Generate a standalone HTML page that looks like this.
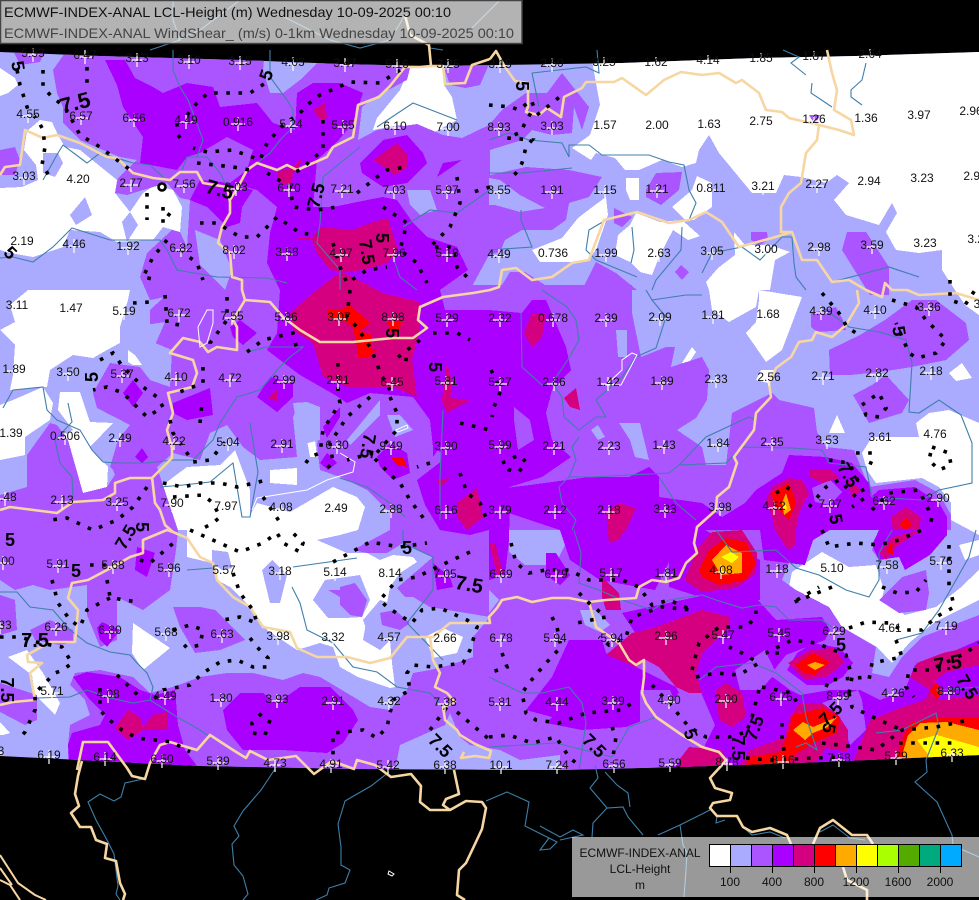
<!DOCTYPE html>
<html><head><meta charset="utf-8"><style>
html,body{margin:0;padding:0;background:#000}
svg{display:block}
.l text{font:12px "Liberation Sans",sans-serif;fill:#111;text-anchor:middle;transform:translateY(4px)}
.b text{font:bold 18px "Liberation Sans",sans-serif;fill:#000;text-anchor:middle}
.t{fill:none;stroke:#f6d6a2;stroke-width:2.6;stroke-linejoin:round}
.r{fill:none;stroke:#3f7fa9;stroke-width:1.1}
.d{fill:none;stroke:#000;stroke-width:3.6;stroke-dasharray:3.6 8.6}
</style></head><body>
<svg width="979" height="900" viewBox="0 0 979 900" xmlns="http://www.w3.org/2000/svg">
<defs>
<clipPath id="m"><polygon points="0,52 100,56 240,60 340,64 420,66 500,65 622,63 756,58 856,56 979,52 979,755 822,762 680,767 560,770 360,769 200,766 100,761 0,756"/></clipPath>
<path id="c" d="M-7 2H7M0 -5V9" stroke="#fff" stroke-width="1.2" fill="none"/>
</defs>
<rect width="979" height="900" fill="#000"/>
<g clip-path="url(#m)" shape-rendering="crispEdges">
<rect width="979" height="900" fill="#aaaaff"/>
<g fill="#fff">
<polygon points="0,68 15,78 18,85 8,93 0,96"/>
<polygon points="0,188 22,187 38,180 36,165 24,150 27,131 40,120 52,122 58,135 65,147 80,150 117,180 115,193 130,212 143,193 155,185 173,190 182,207 180,232 163,227 153,240 117,242 100,232 70,230 63,247 33,257 10,253 0,250"/>
<polygon points="410,66 443,66 444,85 452,97 457,120 433,133 400,125 373,130 377,118 400,90"/>
<polygon points="590,50 979,50 979,315 965,305 955,290 942,270 942,250 919,253 896,250 886,232 897,213 892,203 879,225 846,215 834,200 849,183 837,175 826,183 801,177 784,175 776,193 752,193 719,153 709,135 699,150 696,163 682,167 662,160 639,170 625,170 615,158 596,153 591,160 572,148 590,135 600,105"/>
<polygon points="697,176 712,183 712,207 694,220 685,220 672,207 692,190"/>
<polygon points="626,178 639,178 639,200 630,200 626,190"/>
<polygon points="636,213 660,222 682,220 700,236 688,240 673,230 660,255 652,275 640,272 630,262 615,255 618,235 630,225"/>
<polygon points="606,197 608,215 596,250 586,262 540,262 532,250 562,238 578,218 595,205"/>
<polygon points="734,232 745,245 770,245 790,252 775,260 770,290 709,290 706,282 718,268 735,255"/>
<polygon points="709,290 759,290 756,307 729,322 712,310"/>
<polygon points="759,290 802,297 782,350 766,362 746,333 756,322 759,300"/>
<polygon points="862,453 872,437 919,437 916,423 929,413 949,410 979,423 979,535 951,520 951,503 939,487 922,478 876,483 867,470"/>
<polygon points="949,373 962,363 972,378 956,381"/>
<polygon points="837,415 845,433 829,433"/>
<polygon points="761,370 756,380 768,383 775,370"/>
<polygon points="559,295 570,307 562,310"/>
<polygon points="692,347 696,352 686,367 682,363"/>
<polygon points="792,572 822,552 849,567 876,565 884,590 882,598 905,615 936,607 960,588 979,570 979,600 935,622 910,642 892,663 877,647 842,627 829,607 789,587"/>
<polygon points="959,545 979,540 979,555 965,560"/>
<polygon points="160,487 187,467 220,465 235,450 250,490 250,515 257,503 290,512 333,487 357,497 365,507 358,530 340,535 317,540 347,553 367,553 380,560 393,555 413,557 417,562 400,573 390,587 387,603 367,617 363,640 380,650 390,640 392,663 395,687 390,688 358,677 340,667 333,647 320,643 297,650 267,630 250,607 230,587 217,580 212,563 187,557 187,530 170,530"/>
<polygon points="270,470 297,468 297,485 270,483"/>
<polygon points="307,440 315,440 317,457 310,457"/>
<polygon points="133,623 170,648 143,670 132,653"/>
<polygon points="8,657 27,650 43,673 60,703 55,715 35,695 32,675"/>
<polygon points="0,722 10,733 3,735 0,735"/>
<polygon points="425,637 443,628 463,637 457,653 433,658"/>
<polygon points="0,557 15,565 0,570"/>
<polygon points="594,617 606,622 600,628"/>
<polygon points="128,350 135,355 142,365 133,365 128,362"/>
<polygon points="60,392 80,392 90,422 113,423 90,447 108,467 107,487 83,493 73,467 60,437 73,430 58,410"/>
<polygon points="0,405 13,400 43,387 53,403 50,420 25,437 25,455 0,460"/>
<polygon points="28,290 130,290 128,300 120,327 120,343 107,350 93,358 73,355 50,370 47,387 10,390 13,375 15,345 0,330 15,322 10,305"/>
<polygon points="945,688 979,690 979,698 950,695"/>
</g>
<g fill="#aaaaff">
<polygon points="43,153 58,153 63,163 55,177 43,173"/>
<polygon points="70,215 85,197 92,215 76,225"/>
<polygon points="122,222 130,212 138,225 127,242"/>
<polygon points="262,570 272,560 287,575 280,603 270,603"/>
<polygon points="313,600 325,580 360,575 370,600 362,617 345,618 328,618"/>
<polygon points="363,620 380,600 413,610 410,640 390,640 370,640"/>
<polygon points="212,550 228,552 232,568 222,570 212,563"/>
</g>
<g fill="#aa55ff">
<polygon points="53,70 67,50 265,50 263,70 270,93 283,93 300,80 320,60 412,60 407,80 375,97 362,107 358,140 377,130 417,124 443,135 462,138 489,125 502,110 526,93 547,93 562,73 589,107 582,130 574,107 572,133 552,135 532,130 522,140 490,150 490,175 526,167 569,170 602,177 589,197 569,203 566,220 552,230 522,230 505,240 500,252 489,255 470,290 180,290 187,247 190,200 180,198 167,183 143,190 127,195 115,193 118,178 137,160 120,157 103,150 80,140 63,123 63,107 57,93"/>
<polygon points="147,253 172,230 180,232 187,247 200,290 150,300 140,277"/>
<polygon points="180,285 632,285 632,313 641,357 666,347 675,347 671,367 702,357 709,370 707,400 696,418 677,430 702,447 706,465 726,465 732,413 772,393 779,400 814,408 817,432 826,447 854,450 862,470 869,487 915,480 939,493 951,515 951,530 922,530 899,557 879,560 872,550 879,530 822,530 812,537 789,563 782,580 796,590 829,607 842,627 876,647 872,673 889,677 902,657 922,637 979,615 979,780 480,780 457,730 450,713 437,697 430,670 450,665 473,657 473,637 490,617 430,607 413,597 405,597 397,588 433,557 403,543 387,553 367,553 353,550 390,530 390,513 367,490 343,478 320,470 317,445 320,420 320,407 300,403 293,417 297,457 260,460 243,447 227,425 210,433 200,460 173,453 157,467 117,480 113,470 110,467 118,440 130,425 97,408 93,393 110,363 140,367 150,380 170,387 172,350 148,340 150,323 150,310 163,298"/>
<polygon points="68,745 70,725 90,715 85,700 70,685 75,673 100,670 133,677 150,693 173,687 200,677 227,673 253,673 283,680 303,673 320,677 347,693 370,707 390,710 407,690 413,673 430,670 440,700 450,713 445,725 400,745 395,770 68,780"/>
<polygon points="0,495 27,487 27,455 50,423 57,425 68,440 83,493 107,487 118,470 157,467 178,530 176,550 170,590 143,610 117,597 117,640 100,647 87,615 87,585 50,590 33,585 15,590 0,580"/>
<polygon points="0,595 15,600 17,630 0,635"/>
<polygon points="30,630 50,620 73,630 73,642 60,645 35,640"/>
<polygon points="0,683 37,695 37,720 25,725 0,712"/>
<polygon points="173,607 200,607 215,610 245,640 220,650 195,653 180,627"/>
<polygon points="340,587 355,583 367,600 362,617 350,615 340,605"/>
<polygon points="328,590 346,590 340,597"/>
<polygon points="380,613 395,610 410,623 400,630 382,625"/>
<polygon points="829,350 860,335 885,320 912,300 936,300 966,323 969,340 946,360 912,367 880,372 850,375 830,375"/>
<polygon points="886,375 909,400 902,413 869,423 853,395 872,385"/>
<polygon points="811,313 836,307 843,320 846,330 817,332 811,327"/>
<polygon points="847,232 866,232 889,267 889,295 870,295 842,250"/>
<polygon points="751,232 767,232 768,240 760,245 751,240"/>
<polygon points="809,115 820,115 815,125"/>
<polygon points="681,265 689,272 682,280 675,272"/>
<polygon points="614,208 632,217 622,227 614,223"/>
<polygon points="646,190 656,173 682,172 679,190 661,205 646,197"/>
<polygon points="499,290 510,272 525,272 545,285 560,290"/>
<polygon points="582,290 596,262 616,273 637,290"/>
<polygon points="0,150 15,147 20,160 15,175 0,175"/>
<polygon points="13,50 45,50 40,62 20,65"/>
<polygon points="879,600 902,577 926,570 929,593 926,610 899,613"/>
<polygon points="445,70 470,62 490,62 480,85 465,88 450,85"/>
</g>
<g fill="#aaaaff">
<polygon points="407,190 430,190 437,210 420,215 410,205"/>
<polygon points="489,178 500,180 520,195 545,208 520,212 495,205 489,205"/>
<polygon points="195,230 220,240 232,270 225,290 200,265"/>
<polygon points="293,403 307,402 320,407 320,440 300,445"/>
<polygon points="347,440 380,400 380,415 350,445"/>
<polygon points="387,415 400,415 413,430 395,437"/>
<polygon points="616,330 627,330 627,357 618,357"/>
<polygon points="619,423 640,423 649,460 635,457 630,440"/>
<polygon points="591,430 598,425 605,437 598,440"/>
<polygon points="509,530 560,530 565,545 555,565 525,565 509,552"/>
<polygon points="489,590 499,600 489,613"/>
<polygon points="759,710 766,720 752,722"/>
<polygon points="580,610 595,610 610,625 600,632 585,625"/>
<polygon points="395,770 400,745 445,725 470,745 500,750 520,760 560,755 560,770"/>
<polygon points="940,680 979,665 979,705 945,700"/>
<polygon points="415,625 440,612 470,622 473,640 473,657 450,665 430,670 412,660 415,640"/>
<polygon points="145,325 165,322 155,345 145,345"/>
</g>
<polygon points="945,688 979,690 979,698 950,695" fill="#fff"/>
<polygon points="425,637 443,628 463,637 457,653 433,658" fill="#fff"/>
<g fill="#aa00ff">
<polygon points="105,60 125,60 135,78 153,87 163,93 187,83 213,87 220,107 257,103 273,123 295,130 297,93 313,83 340,83 363,93 353,123 337,142 317,160 313,207 333,207 367,200 383,197 397,200 413,223 427,237 457,247 468,270 440,290 445,310 489,310 522,313 532,300 546,300 566,347 571,370 552,390 546,413 552,440 571,457 542,477 500,490 420,480 447,457 433,447 430,420 413,397 370,393 347,403 335,395 300,375 280,360 267,350 277,333 280,290 267,263 270,233 277,207 257,190 230,183 247,170 253,150 227,137 200,153 187,157 177,170 140,163 143,137 123,107 117,85"/>
<polygon points="417,480 447,457 490,460 510,490 509,540 505,575 489,580 489,530 470,535 440,530 425,505"/>
<polygon points="200,180 230,183 253,190 242,207 240,223 227,227 207,207 190,200"/>
<polygon points="360,163 383,140 407,135 423,153 427,163 407,183 383,187 362,173"/>
<polygon points="437,177 443,163 462,160"/>
<polygon points="123,393 133,380 143,393 133,407"/>
<polygon points="173,403 210,388 213,415 187,420 173,413"/>
<polygon points="135,457 142,448 148,457 142,463"/>
<polygon points="230,327 240,320 257,333 243,345 233,337"/>
<polygon points="323,427 340,407 340,417 327,438"/>
<polygon points="320,463 327,453 337,463 328,470"/>
<polygon points="377,457 390,443 407,453 410,473 393,480 380,467"/>
<polygon points="433,440 440,447 433,457"/>
<polygon points="433,563 450,577 453,587 437,590"/>
<polygon points="137,547 155,553 147,577 135,570"/>
<polygon points="97,628 102,622 120,630 107,647 100,640"/>
<polygon points="73,677 87,672 120,677 140,690 155,695 175,690 178,725 185,750 200,770 70,770 68,745 72,733 100,725 105,715 90,700"/>
<polygon points="223,710 240,693 263,693 277,703 300,687 330,687 353,710 358,720 343,743 327,753 283,750 243,750 227,730"/>
<polygon points="257,397 270,377 293,383 293,397 277,412"/>
<polygon points="589,477 629,477 649,467 659,477 659,497 702,503 722,517 745,503 756,490 782,473 789,455 826,457 852,463 869,483 871,497 879,490 915,487 939,503 947,517 947,535 930,555 905,570 899,557 879,560 872,545 879,530 830,530 813,540 805,565 789,563 764,560 760,530 705,530 670,560 655,590 600,580 570,560 560,530 500,510 489,490 530,485"/>
<polygon points="669,587 700,597 760,600 760,560 705,530 669,560"/>
<polygon points="546,553 556,553 570,575 560,585 546,575"/>
<polygon points="622,613 696,597 756,598 776,620 822,617 830,630 825,640 786,655 770,675 790,690 800,695 775,700 760,740 715,725 700,690 690,660 660,650 640,640"/>
<polygon points="552,717 526,710 552,677 569,640 602,640 606,653 636,667 676,687 679,693 652,717 626,727 582,730 546,723"/>
<polygon points="797,653 813,643 840,648 853,663 843,677 828,685 807,685 787,670"/>
<polygon points="775,700 800,695 830,690 860,690 880,700 905,690 915,665 945,655 979,640 979,770 660,770 700,755 715,725 740,715"/>
<polygon points="505,350 540,340 550,400 520,400"/>
<polygon points="445,400 480,395 500,470 440,470"/>
</g>
<g fill="#aa55ff">
<polygon points="514,407 530,420 534,440 518,450 514,420"/>
<polygon points="822,703 858,690 862,700 866,730 850,745 840,717"/>
<polygon points="812,488 830,480 842,492 830,505 815,502"/>
<polygon points="735,670 765,650 776,673 760,690 740,690"/>
<polygon points="640,690 670,690 676,705 660,720 640,725"/>
</g>
<g fill="#d4007f">
<polygon points="293,238 313,237 320,227 353,230 370,223 388,218 398,250 388,263 363,270 343,272 330,270 317,253 312,240"/>
<polygon points="290,313 313,293 333,277 343,272 383,293 420,302 420,330 412,360 417,397 393,387 348,387 323,377 313,343 293,330"/>
<polygon points="313,110 325,103 327,117 322,122"/>
<polygon points="277,172 293,167 302,157 300,165 293,172 292,183 283,185 277,177"/>
<polygon points="373,160 397,143 408,155 408,167 395,175"/>
<polygon points="524,333 532,313 546,313 542,337 532,347"/>
<polygon points="564,398 576,388 580,410 570,407"/>
<polygon points="440,397 470,400 447,413"/>
<polygon points="447,362 452,383 450,400 442,400"/>
<polygon points="766,500 772,487 789,478 802,480 809,493 799,513 796,530 795,545 788,550 775,530 773,520"/>
<polygon points="809,470 830,470 840,478 822,483 810,477"/>
<polygon points="847,480 862,490 852,498"/>
<polygon points="891,517 906,507 921,517 919,530 893,530"/>
<polygon points="879,553 892,537 921,530 896,547 886,560"/>
<polygon points="606,512 619,503 636,508 626,530 618,540 609,543"/>
<polygon points="437,480 450,478 440,487"/>
<polygon points="457,503 477,488 483,517 467,530 457,517"/>
<polygon points="489,543 495,543 503,573 497,575"/>
<polygon points="268,398 277,390 278,402"/>
<polygon points="115,728 128,710 140,717 143,727 153,715 167,712 168,730 143,730 128,740"/>
<polygon points="606,655 632,633 656,627 702,610 731,617 727,630 702,653 696,673 702,693 689,693 676,687 659,667 646,660 636,667 619,660"/>
<polygon points="602,577 619,593 621,610 606,610 602,597"/>
<polygon points="716,690 726,683 742,693 746,717 732,727 719,720"/>
<polygon points="684,580 699,547 712,532 742,530 757,553 756,573 736,588 702,592"/>
<polygon points="788,663 810,650 833,648 845,662 827,677 805,680"/>
<polygon points="740,765 750,750 785,737 790,717 800,703 822,703 838,715 848,730 848,752 826,748 810,770 740,770"/>
<polygon points="910,677 917,663 943,653 979,645 979,665 947,672 935,680 938,700 979,695 979,770 850,770 870,720 900,708 925,700 930,690"/>
<polygon points="679,760 689,747 722,750 726,770 679,770"/>
</g>
<g fill="#f00">
<polygon points="327,310 340,310 350,305 370,323 357,333 368,347 375,350 370,357 357,357 357,347 353,327 343,320 328,318"/>
<polygon points="388,322 403,320 397,333 390,332"/>
<polygon points="390,457 403,457 407,467 397,465"/>
<polygon points="771,493 789,483 796,503 789,520 776,507"/>
<polygon points="699,570 709,550 726,538 746,542 756,563 746,580 719,585 702,577"/>
<polygon points="795,665 813,653 830,662 815,675 803,673"/>
<polygon points="743,770 750,757 780,752 787,737 793,715 823,708 840,717 837,733 813,743 797,753 783,770"/>
<polygon points="893,770 903,737 910,723 940,717 979,717 979,770"/>
<polygon points="930,690 937,682 942,692 937,700"/>
<polygon points="900,525 906,517 912,525 906,530"/>
<polygon points="887,552 892,540 893,555"/>
<polygon points="357,330 372,335 370,350 358,350"/>
</g>
<g fill="#ffaa00">
<polygon points="782,503 786,493 791,510 784,515"/>
<polygon points="712,560 726,545 742,553 742,573 721,575"/>
<polygon points="807,665 815,662 825,665 815,670"/>
<polygon points="793,730 803,722 813,727 837,717 828,727 813,733 805,740"/>
<polygon points="903,752 908,735 920,723 947,722 979,730 979,770 903,770"/>
</g>
<g fill="#ff0">
<polygon points="721,557 731,552 739,557 732,563"/>
<polygon points="782,507 786,505 787,510"/>
<polygon points="917,740 937,735 979,747 979,770 933,770 927,753"/>
</g>
</g>
<g class="r">
<path d="M173 50V70L180 87 188 100 193 113 203 140 197 157H187L182 170M187 157H207L220 173 227 187"/>
<path d="M270 50V77L287 100 293 110V127L280 140 270 153 257 163"/>
<path d="M43 180 58 153 63 145 87 163 100 153 113 157 133 163 150 165 163 177"/>
<path d="M377 127 413 103 457 120M360 147 323 177 320 223 317 243 340 270V290"/>
<path d="M393 257 400 277 417 290M403 227 430 210 457 213 490 190"/>
<path d="M0 258 13 257 33 262 53 247 72 228 110 240 160 240 167 250 177 270 217 277 267 278 287 283"/>
<path d="M569 157V145H589L602 155H649L669 162 684 165 689 190 696 203 689 220"/>
<path d="M489 173H522L572 168M489 140 509 133 529 140 562 143 569 157M532 73 539 107M532 73 586 67 599 73 597 50"/>
<path d="M521 210V220L532 247 489 250M606 220 589 230 586 250 596 260 637 277M632 227 634 250 631 263M682 227 681 250 656 280 652 290"/>
<path d="M702 273 712 253 742 247 760 260 782 237 792 237 794 263 796 277 806 290M832 282 889 267 919 277"/>
<path d="M783 50 799 57 791 63 806 75M812 83 811 93 832 107M866 63 862 80 851 90V97L862 105"/>
<path d="M521 313 522 367 542 385 552 383 569 358 579 340 576 320 567 307 542 290M552 383 562 397 564 417 579 430 596 417H606L596 400 622 377 636 357 656 348 666 317 652 300 646 290M652 300 686 295H702"/>
<path d="M579 437 572 447 576 460 569 477 559 487 562 503 576 520 572 530M569 477H592L629 475 669 473 679 465 706 437 749 417 756 420M679 465 726 463 742 447 792 448 822 450 829 463 866 467 872 497 922 500 939 490 972 483V443L961 415 939 400 919 413 909 412 912 363 906 340 879 332 849 327 822 307"/>
<path d="M659 477 676 503 696 520"/>
<path d="M3 408 13 390 43 387 47 410 57 420 80 430 92 450 103 462 117 463H147L173 460 193 460 213 440 220 423 237 397 260 390 277 370 290 357 303 347H267L247 352"/>
<path d="M68 403 72 422 55 440 60 463 72 477 73 497M160 487 183 485 210 482 233 463 242 517H250L258 472 250 423"/>
<path d="M340 478 367 487 390 503 405 517M443 410 440 477V520"/>
<path d="M0 592H17L30 607 53 610 70 630 87 643 110 652 130 655 137 663 147 673 153 687 150 700 177 717 200 730 210 737"/>
<path d="M37 698 70 697 87 690 110 698 133 703 150 700M187 570 213 568M293 567 357 558M292 587 300 603 307 630 333 643 353 667 377 672 397 687 430 693 443 707"/>
<path d="M403 530V543L433 557V590L407 623 443 660"/>
<path d="M574 530 581 553 579 583 599 590 622 600 652 610 669 600 702 595 716 600 742 608 759 605 776 607 789 620H822L832 627"/>
<path d="M716 530 732 552 776 550 796 568 819 575 846 590 869 597 879 580V553L892 530"/>
<path d="M896 640 922 633 939 610 969 557 976 530"/>
<path d="M489 677 522 693H542L569 687 582 703 586 723 579 770M489 747 556 743 612 757M612 757 629 727 656 717"/>
<path d="M699 680 716 667 752 663 776 673 802 693 806 717 817 750 806 743 796 747"/>
<path d="M876 733 902 730 936 713 939 727 926 760 927 772 915 782 937 802 952 835 953 845 963 850 979 857"/>
<path d="M936 690 979 687"/>
<path d="M143 779 125 783 121 797 114 801 100 794 88 802 96 820 107 840 114 854 118 886 116 894 120 900"/>
<path d="M275 769 261 790 243 811 234 826 239 836 232 844 234 865 243 876 248 894 243 900"/>
<path d="M389 772 371 786 357 794 345 801 338 824 341 847V865L350 870 345 883 329 888 327 895 316 900"/>
<path d="M486 801 507 792 529 802 525 826 539 833 557 842 550 849 540 850 549 838"/>
<path d="M595 765 598 778 590 788 607 808 623 807 628 817 643 835M605 772 617 785 628 793 630 807M607 808 593 823 592 837"/>
<path d="M710 810 680 825 658 835M680 825 683 845 687 853 686 870 684 897M540 826 560 837 573 830 583 835 560 840"/>
<path d="M717 816 716 823 725 820M743 827 752 835 770 832 785 838"/>
<path d="M820 832 833 825 850 838 865 840"/>
<path d="M173 0V20L180 40 150 50M240 0 200 30 178 40M405 15 390 40 360 48 330 40 270 10M430 48 443 50M500 0 470 30"/>
</g>
<g class="t">
<path d="M0 175 5 167 20 165 25 130 43 138 57 135 80 143 107 157 117 158 133 173 153 178 170 180 180 172 197 172 203 183 227 187 230 202V213L222 227 218 243 230 253 232 277 242 280V290L245 300 270 302 283 317 300 330 320 342H353L393 338H413L427 328 418 320 420 307 443 297 473 293 490 290 499 287 502 270 516 268 532 280 552 277 572 263 589 260 604 220 637 212 669 223 689 220 706 212 722 222 739 247 772 238 792 232 802 260H817L832 282 849 280 866 290 882 297 885 283 892 290 907 290 919 295 956 293 979 300"/>
<path d="M857 290 859 303 846 325 832 337 816 332 812 340 799 342 791 357 776 368 769 383 771 397 756 413 754 430 734 457 737 463 729 487 717 497 716 510 697 527 694 543 697 553 686 563 679 578 666 582 652 580 639 587 636 598 606 600 589 602 569 598H552L532 602 517 597 502 600 497 608 489 617 490 623H450L433 637H407L390 658 370 663 347 657H317L297 648 290 632 263 627 250 607 233 597 217 580 213 563 200 557 187 538 173 532 167 530 143 540V553L130 557 107 570 88 580 72 583 68 598 78 610 75 642H50L27 655 28 662 42 663 30 673 35 700 13 702 0 705"/>
<path d="M589 602 596 627 619 643 629 660 636 665 644 660V677L642 693 646 703 656 717 682 735 702 747 719 752 726 760 722 765 710 778 715 788 732 793 730 800 713 803 710 808 717 816H737L743 827 752 832 770 828 787 835 791 844"/>
<path d="M813 844 820 828 833 820 852 835H867L873 844M843 867 847 880 867 890V900"/>
<path d="M0 510 10 507 57 513 73 502 103 500 115 493V483L130 478H152L172 458V448L167 430 173 413 168 393 192 387 197 373 193 360 170 353 183 338 200 342 208 352 217 347 237 350V327L233 320 245 300M152 477 155 503 160 510 165 525 173 532"/>
<path d="M430 637 433 660 440 673 435 687 447 693 455 702 443 707 445 720 457 730 460 735 475 744 491 751 489 758 475 756 461 758 464 752"/>
<path d="M77 770 83 742H108L127 768 132 776 145 779 150 763 160 745 170 742 197 750 210 735 233 750 246 758 250 751 268 760 296 756 314 774 332 761 354 769 357 760 375 765 391 777 411 774 421 786 420 802 430 810H450L466 801 482 802 486 808 482 829 475 844 466 863 459 870 457 895 465 900M450 810 443 805 446 799 459 794 454 770"/>
<path d="M82 761 78 776 75 794 79 806 71 813 80 827H91L96 840 107 844 105 858 116 861 120 883 125 894 123 900"/>
<path d="M405 15 410 35 429 45 431 66 420 67 405 67 390 86 379 97 358 105 353 137 333 147 327 157 297 170 287 165 277 170 257 163 247 170 238 187 230 200"/>
<path d="M431 66H443L445 84 465 83 472 65 490 59 496 51 505 67 515 81 528 83V107L526 112 539 115 547 108 561 117 564 97 582 88 586 82H614L622 78 646 95 664 80 681 72 702 75 719 73 736 83 742 80 759 93 766 110 782 112 789 118 819 125 839 130 854 135 851 120 834 110 837 90 832 73 827 50"/>
<path d="M819 125 817 140 806 153 801 183 789 193 781 207V232H792"/>
<path d="M0 855 18 883 35 895 46 900M0 880 10 885 20 900M0 868 12 885" stroke-width="2"/>
</g>
<g fill="none" stroke="#fff" stroke-width="1">
<polygon points="207,310 213,310 213,323 207,343 200,347 198,327"/>
<polyline points="340,453 355,462 353,472 327,480 307,490 257,498 252,510"/>
<polygon points="632,353 637,355 629,370 621,385 606,385 622,370 622,360"/>
<polygon points="389,871 394,874 392,876 388,874"/>
<polygon points="398,432 408,428 407,425 396,430"/>
</g>
<g clip-path="url(#m)">
<path class="d" d="M43 70V87L52 97 65 107 80 135 100 147 117 160 133 172M87 67V85M17 70 20 85 28 110 38 120 43 130 45 147 42 165 50 177M177 123V133L183 143M187 115 197 103 208 93H227L250 93 267 82M400 70 380 83 350 82 320 95 307 105 300 113 283 125 267 143 260 160 233 150 207 152 193 148M323 120V150L300 170 293 173M197 163 233 167 250 170M267 173 290 187 293 207 317 210 337 207M357 193 377 177 387 170 407 167M383 207 407 223 400 250 417 263 427 283M457 177 460 203 450 227 430 247 453 247 457 267 467 277M490 187 470 193M200 223H217L240 237H257L277 217 300 233 317 235M167 240 153 257 143 277 157 280M180 250 197 263 203 280M333 243 340 267 347 283 367 270 387 267M147 193V220M163 207V223L170 213"/>
<path class="d" d="M100 360 113 353 123 367 143 387 157 397 163 407 147 417 137 407 123 393 107 387 93 390M133 303 150 302M165 295 167 323 180 325M227 297V320L210 343V350M203 367V383L177 393M200 423 202 403M170 420 173 433 187 453 193 462 210 460 227 440M247 352 263 340 293 333 297 350M350 290 347 317 357 327 370 347 377 363 380 373 390 390M338 363V393L340 403 323 430 320 453 310 457 303 467M370 397 347 417 330 443 333 463 325 470M390 397 397 413V430L373 457 393 477 400 483 410 500 427 523M433 333H457L470 340M420 340 397 358 410 360M460 423 490 430M430 463 417 467M460 473 467 493 480 503 487 520M373 453 347 460M163 483 183 487 200 483H220L237 487 267 480M147 487 133 507 117 520 93 530 67 518 50 520M173 497 203 495 213 503 220 517 213 523 200 530M263 497 267 503 283 527"/>
<path class="d" d="M190 530 240 552 263 543 277 533 283 543 300 552 303 543 293 533M233 573 240 593 253 610 257 623 240 617 223 620M250 638 257 647 268 658 267 667H253L237 660 220 662 203 673 190 685 163 690 153 700M0 637H20L40 643 62 647 72 663 63 670 55 673 43 685 35 693V710L25 732 18 740M52 580 58 603 70 620 80 627 87 610 100 603 110 598M107 580 110 597 123 600 140 602M90 565H110M140 560 150 563 177 540M117 675 143 700M100 688V710L107 718 122 730 137 738 172 742 190 752M333 562 370 542 400 547 427 543M470 552 437 567 417 577 397 580 380 600 387 607 412 623 422 610 440 608 467 620 477 627 470 650 463 663 433 667 413 665 407 673 410 690 393 700 387 727 377 738 363 730 333 733V755M270 720 265 735 252 733V723L263 712M173 630 190 625 203 630 200 645 187 648 180 640M457 712 490 740M430 730 447 707"/>
<path class="d" d="M511 543 516 563 529 573 546 570H569L589 580H622L639 587 652 605 669 600 692 610 662 607 632 617 626 637 609 645 599 637M552 617 557 627 561 647 546 663 529 683 522 693 526 713 536 720 559 723 586 713 622 710 636 700M502 653 507 667 489 673M579 593 589 603 606 617 577 623M652 685 669 703 689 727 706 737H729L746 732M612 727 616 737 612 763M489 737 509 735 532 743 556 737 569 757 576 763M692 670 699 643 719 627H746L756 617V610M696 677 716 673 739 675 759 663 742 653 729 647M759 690 752 717 746 733M762 687 792 693 799 707M779 653H766L792 640 816 643 846 655 852 677 849 693M826 687 829 680 869 677M849 628 866 622 889 623 902 630H922L936 617 954 607 952 597M949 545V590M882 587 897 593 916 592 926 580M832 587 792 603 819 587M822 530 829 547 856 543 879 545 899 540 922 530M896 640 902 657 872 663 869 680M929 670H909L906 687 914 697M936 667 966 653 979 643M849 693 852 707 879 720 902 730M822 743 856 747 876 750 902 730 936 727 969 720M782 723V743L786 757M746 758 769 760 816 758 842 757M899 743H916L952 743"/>
<path class="d" d="M892 300 916 307 926 320 946 340 936 353 917 358 909 353 896 323M822 293 839 313 847 327 856 333M862 405 879 393 886 408 879 417 866 415ZM932 447 949 453 951 465 939 470 929 460ZM809 507 826 487 839 480 859 500M856 453H872V460L869 467M829 460 849 463 866 497 852 507M872 510 889 493 919 490 932 517 929 530M502 463 519 455 526 462 519 472 509 470ZM491 370 501 390 494 407 492 417M776 493 786 487 792 490M950 280V300L965 305 975 290M489 105 511 107 519 110 531 100 534 107 524 125 521 132 507 138 532 140 526 147 522 163 517 172 511 178M537 115 562 95"/>
<circle cx="162" cy="187" r="3.5" fill="#fff" stroke="#000" stroke-width="2.6"/>
</g>
<g class="l">
<use href="#c" x="33" y="53"/><text x="33" y="53">5.53</text><use href="#c" x="85" y="55"/><text x="85" y="55">6.47</text><use href="#c" x="137" y="58"/><text x="137" y="58">3.13</text><use href="#c" x="189" y="60"/><text x="189" y="60">3.10</text><use href="#c" x="240" y="61"/><text x="240" y="61">3.15</text><use href="#c" x="293" y="62"/><text x="293" y="62">4.03</text><use href="#c" x="345" y="63"/><text x="345" y="63">3.47</text><use href="#c" x="397" y="64"/><text x="397" y="64">5.16</text><use href="#c" x="448" y="64"/><text x="448" y="64">3.25</text><use href="#c" x="500" y="64"/><text x="500" y="64">3.15</text><use href="#c" x="552" y="63"/><text x="552" y="63">2.50</text><use href="#c" x="604" y="62"/><text x="604" y="62">3.25</text><use href="#c" x="656" y="62"/><text x="656" y="62">1.62</text><use href="#c" x="708" y="60"/><text x="708" y="60">4.14</text><use href="#c" x="761" y="58"/><text x="761" y="58">1.85</text><use href="#c" x="814" y="56"/><text x="814" y="56">1.87</text><use href="#c" x="870" y="54"/><text x="870" y="54">2.64</text>
<use href="#c" x="28" y="114"/><text x="28" y="114">4.55</text><use href="#c" x="81" y="116"/><text x="81" y="116">6.57</text><use href="#c" x="134" y="118"/><text x="134" y="118">6.56</text><use href="#c" x="186" y="120"/><text x="186" y="120">4.49</text><use href="#c" x="238" y="122"/><text x="238" y="122">0.916</text><use href="#c" x="291" y="124"/><text x="291" y="124">5.24</text><use href="#c" x="343" y="125"/><text x="343" y="125">5.65</text><use href="#c" x="395" y="126"/><text x="395" y="126">6.10</text><use href="#c" x="448" y="127"/><text x="448" y="127">7.00</text><use href="#c" x="499" y="127"/><text x="499" y="127">8.93</text><use href="#c" x="552" y="126"/><text x="552" y="126">3.03</text><use href="#c" x="605" y="125"/><text x="605" y="125">1.57</text><use href="#c" x="657" y="125"/><text x="657" y="125">2.00</text><use href="#c" x="709" y="124"/><text x="709" y="124">1.63</text><use href="#c" x="761" y="121"/><text x="761" y="121">2.75</text><use href="#c" x="814" y="119"/><text x="814" y="119">1.26</text><use href="#c" x="866" y="118"/><text x="866" y="118">1.36</text><use href="#c" x="919" y="115"/><text x="919" y="115">3.97</text><use href="#c" x="971" y="111"/><text x="971" y="111">2.96</text>
<use href="#c" x="24" y="176"/><text x="24" y="176">3.03</text><use href="#c" x="78" y="179"/><text x="78" y="179">4.20</text><use href="#c" x="131" y="183"/><text x="131" y="183">2.77</text><use href="#c" x="184" y="184"/><text x="184" y="184">7.56</text><use href="#c" x="236" y="187"/><text x="236" y="187">8.03</text><use href="#c" x="289" y="188"/><text x="289" y="188">6.70</text><use href="#c" x="342" y="189"/><text x="342" y="189">7.21</text><use href="#c" x="394" y="190"/><text x="394" y="190">7.03</text><use href="#c" x="447" y="190"/><text x="447" y="190">5.97</text><use href="#c" x="499" y="190"/><text x="499" y="190">3.55</text><use href="#c" x="552" y="190"/><text x="552" y="190">1.91</text><use href="#c" x="605" y="190"/><text x="605" y="190">1.15</text><use href="#c" x="657" y="189"/><text x="657" y="189">1.21</text><use href="#c" x="711" y="188"/><text x="711" y="188">0.811</text><use href="#c" x="763" y="186"/><text x="763" y="186">3.21</text><use href="#c" x="817" y="184"/><text x="817" y="184">2.27</text><use href="#c" x="869" y="181"/><text x="869" y="181">2.94</text><use href="#c" x="922" y="178"/><text x="922" y="178">3.23</text><use href="#c" x="975" y="176"/><text x="975" y="176">2.96</text>
<use href="#c" x="22" y="241"/><text x="22" y="241">2.19</text><use href="#c" x="74" y="244"/><text x="74" y="244">4.46</text><use href="#c" x="128" y="246"/><text x="128" y="246">1.92</text><use href="#c" x="181" y="248"/><text x="181" y="248">6.82</text><use href="#c" x="234" y="250"/><text x="234" y="250">8.02</text><use href="#c" x="287" y="252"/><text x="287" y="252">3.58</text><use href="#c" x="341" y="253"/><text x="341" y="253">4.97</text><use href="#c" x="394" y="253"/><text x="394" y="253">7.96</text><use href="#c" x="447" y="253"/><text x="447" y="253">5.18</text><use href="#c" x="499" y="254"/><text x="499" y="254">4.49</text><use href="#c" x="553" y="253"/><text x="553" y="253">0.736</text><use href="#c" x="606" y="253"/><text x="606" y="253">1.99</text><use href="#c" x="659" y="253"/><text x="659" y="253">2.63</text><use href="#c" x="712" y="251"/><text x="712" y="251">3.05</text><use href="#c" x="766" y="249"/><text x="766" y="249">3.00</text><use href="#c" x="819" y="247"/><text x="819" y="247">2.98</text><use href="#c" x="872" y="245"/><text x="872" y="245">3.59</text><use href="#c" x="925" y="243"/><text x="925" y="243">3.23</text><use href="#c" x="979" y="239"/><text x="979" y="239">3.26</text>
<use href="#c" x="17" y="305"/><text x="17" y="305">3.11</text><use href="#c" x="71" y="308"/><text x="71" y="308">1.47</text><use href="#c" x="124" y="311"/><text x="124" y="311">5.19</text><use href="#c" x="179" y="313"/><text x="179" y="313">6.72</text><use href="#c" x="232" y="316"/><text x="232" y="316">7.55</text><use href="#c" x="286" y="317"/><text x="286" y="317">5.86</text><use href="#c" x="339" y="317"/><text x="339" y="317">3.07</text><use href="#c" x="393" y="317"/><text x="393" y="317">8.98</text><use href="#c" x="447" y="318"/><text x="447" y="318">5.29</text><use href="#c" x="500" y="318"/><text x="500" y="318">2.32</text><use href="#c" x="553" y="318"/><text x="553" y="318">0.678</text><use href="#c" x="606" y="318"/><text x="606" y="318">2.39</text><use href="#c" x="660" y="317"/><text x="660" y="317">2.09</text><use href="#c" x="713" y="315"/><text x="713" y="315">1.81</text><use href="#c" x="768" y="314"/><text x="768" y="314">1.68</text><use href="#c" x="821" y="311"/><text x="821" y="311">4.39</text><use href="#c" x="875" y="310"/><text x="875" y="310">4.10</text><use href="#c" x="929" y="307"/><text x="929" y="307">3.36</text><use href="#c" x="982" y="304"/><text x="982" y="304">3.4</text>
<use href="#c" x="14" y="369"/><text x="14" y="369">1.89</text><use href="#c" x="68" y="372"/><text x="68" y="372">3.50</text><use href="#c" x="122" y="374"/><text x="122" y="374">5.37</text><use href="#c" x="176" y="377"/><text x="176" y="377">4.10</text><use href="#c" x="230" y="378"/><text x="230" y="378">4.72</text><use href="#c" x="284" y="380"/><text x="284" y="380">2.99</text><use href="#c" x="338" y="380"/><text x="338" y="380">2.81</text><use href="#c" x="392" y="382"/><text x="392" y="382">6.45</text><use href="#c" x="446" y="381"/><text x="446" y="381">5.81</text><use href="#c" x="500" y="382"/><text x="500" y="382">5.27</text><use href="#c" x="554" y="382"/><text x="554" y="382">2.86</text><use href="#c" x="608" y="382"/><text x="608" y="382">1.42</text><use href="#c" x="662" y="381"/><text x="662" y="381">1.89</text><use href="#c" x="716" y="379"/><text x="716" y="379">2.33</text><use href="#c" x="769" y="377"/><text x="769" y="377">2.56</text><use href="#c" x="823" y="376"/><text x="823" y="376">2.71</text><use href="#c" x="877" y="373"/><text x="877" y="373">2.82</text><use href="#c" x="931" y="371"/><text x="931" y="371">2.18</text>
<use href="#c" x="11" y="433"/><text x="11" y="433">1.39</text><use href="#c" x="65" y="436"/><text x="65" y="436">0.506</text><use href="#c" x="120" y="438"/><text x="120" y="438">2.49</text><use href="#c" x="174" y="441"/><text x="174" y="441">4.22</text><use href="#c" x="228" y="442"/><text x="228" y="442">5.04</text><use href="#c" x="282" y="444"/><text x="282" y="444">2.91</text><use href="#c" x="337" y="445"/><text x="337" y="445">6.30</text><use href="#c" x="391" y="446"/><text x="391" y="446">9.49</text><use href="#c" x="446" y="446"/><text x="446" y="446">3.90</text><use href="#c" x="500" y="445"/><text x="500" y="445">5.99</text><use href="#c" x="554" y="446"/><text x="554" y="446">2.21</text><use href="#c" x="609" y="446"/><text x="609" y="446">2.23</text><use href="#c" x="664" y="445"/><text x="664" y="445">1.43</text><use href="#c" x="718" y="443"/><text x="718" y="443">1.84</text><use href="#c" x="772" y="442"/><text x="772" y="442">2.35</text><use href="#c" x="827" y="440"/><text x="827" y="440">3.53</text><use href="#c" x="880" y="437"/><text x="880" y="437">3.61</text><use href="#c" x="935" y="434"/><text x="935" y="434">4.76</text>
<use href="#c" x="5" y="497"/><text x="5" y="497">3.48</text><use href="#c" x="62" y="500"/><text x="62" y="500">2.13</text><use href="#c" x="117" y="502"/><text x="117" y="502">3.25</text><use href="#c" x="172" y="503"/><text x="172" y="503">7.90</text><use href="#c" x="226" y="506"/><text x="226" y="506">7.97</text><use href="#c" x="281" y="507"/><text x="281" y="507">4.08</text><use href="#c" x="336" y="508"/><text x="336" y="508">2.49</text><use href="#c" x="391" y="509"/><text x="391" y="509">2.88</text><use href="#c" x="446" y="510"/><text x="446" y="510">6.16</text><use href="#c" x="500" y="510"/><text x="500" y="510">3.79</text><use href="#c" x="555" y="510"/><text x="555" y="510">2.12</text><use href="#c" x="609" y="510"/><text x="609" y="510">2.18</text><use href="#c" x="665" y="509"/><text x="665" y="509">3.33</text><use href="#c" x="720" y="507"/><text x="720" y="507">3.98</text><use href="#c" x="774" y="506"/><text x="774" y="506">4.52</text><use href="#c" x="830" y="504"/><text x="830" y="504">7.07</text><use href="#c" x="884" y="501"/><text x="884" y="501">6.62</text><use href="#c" x="938" y="498"/><text x="938" y="498">2.90</text>
<use href="#c" x="3" y="561"/><text x="3" y="561">7.00</text><use href="#c" x="58" y="564"/><text x="58" y="564">5.91</text><use href="#c" x="113" y="565"/><text x="113" y="565">5.68</text><use href="#c" x="169" y="568"/><text x="169" y="568">5.96</text><use href="#c" x="224" y="570"/><text x="224" y="570">5.57</text><use href="#c" x="280" y="571"/><text x="280" y="571">3.18</text><use href="#c" x="335" y="572"/><text x="335" y="572">5.14</text><use href="#c" x="390" y="573"/><text x="390" y="573">8.14</text><use href="#c" x="445" y="574"/><text x="445" y="574">7.05</text><use href="#c" x="501" y="574"/><text x="501" y="574">6.69</text><use href="#c" x="556" y="574"/><text x="556" y="574">6.79</text><use href="#c" x="611" y="573"/><text x="611" y="573">5.17</text><use href="#c" x="666" y="573"/><text x="666" y="573">1.81</text><use href="#c" x="721" y="570"/><text x="721" y="570">4.08</text><use href="#c" x="777" y="569"/><text x="777" y="569">1.18</text><use href="#c" x="832" y="568"/><text x="832" y="568">5.10</text><use href="#c" x="887" y="565"/><text x="887" y="565">7.58</text><use href="#c" x="941" y="561"/><text x="941" y="561">5.76</text>
<use href="#c" x="0" y="625"/><text x="0" y="625">4.33</text><use href="#c" x="56" y="627"/><text x="56" y="627">6.26</text><use href="#c" x="110" y="630"/><text x="110" y="630">6.80</text><use href="#c" x="166" y="632"/><text x="166" y="632">5.68</text><use href="#c" x="222" y="634"/><text x="222" y="634">6.63</text><use href="#c" x="278" y="636"/><text x="278" y="636">3.98</text><use href="#c" x="333" y="637"/><text x="333" y="637">3.32</text><use href="#c" x="389" y="637"/><text x="389" y="637">4.57</text><use href="#c" x="445" y="638"/><text x="445" y="638">2.66</text><use href="#c" x="501" y="638"/><text x="501" y="638">6.78</text><use href="#c" x="555" y="638"/><text x="555" y="638">5.94</text><use href="#c" x="612" y="638"/><text x="612" y="638">5.94</text><use href="#c" x="666" y="636"/><text x="666" y="636">2.96</text><use href="#c" x="723" y="635"/><text x="723" y="635">5.47</text><use href="#c" x="779" y="633"/><text x="779" y="633">5.45</text><use href="#c" x="834" y="631"/><text x="834" y="631">6.29</text><use href="#c" x="890" y="628"/><text x="890" y="628">4.61</text><use href="#c" x="946" y="626"/><text x="946" y="626">7.19</text>
<use href="#c" x="52" y="691"/><text x="52" y="691">5.71</text><use href="#c" x="108" y="694"/><text x="108" y="694">4.08</text><use href="#c" x="165" y="696"/><text x="165" y="696">4.49</text><use href="#c" x="221" y="698"/><text x="221" y="698">1.80</text><use href="#c" x="277" y="699"/><text x="277" y="699">3.93</text><use href="#c" x="333" y="701"/><text x="333" y="701">2.91</text><use href="#c" x="389" y="701"/><text x="389" y="701">4.32</text><use href="#c" x="445" y="702"/><text x="445" y="702">7.38</text><use href="#c" x="500" y="702"/><text x="500" y="702">5.81</text><use href="#c" x="557" y="702"/><text x="557" y="702">4.44</text><use href="#c" x="613" y="701"/><text x="613" y="701">3.39</text><use href="#c" x="669" y="700"/><text x="669" y="700">4.90</text><use href="#c" x="726" y="699"/><text x="726" y="699">2.00</text><use href="#c" x="781" y="697"/><text x="781" y="697">6.76</text><use href="#c" x="838" y="696"/><text x="838" y="696">8.59</text><use href="#c" x="893" y="693"/><text x="893" y="693">4.26</text><use href="#c" x="949" y="691"/><text x="949" y="691">8.80</text>
<use href="#c" x="-4" y="751"/><text x="-4" y="751">5.3</text><use href="#c" x="49" y="755"/><text x="49" y="755">6.19</text><use href="#c" x="105" y="757"/><text x="105" y="757">6.14</text><use href="#c" x="162" y="759"/><text x="162" y="759">6.50</text><use href="#c" x="218" y="761"/><text x="218" y="761">5.39</text><use href="#c" x="275" y="763"/><text x="275" y="763">4.73</text><use href="#c" x="331" y="764"/><text x="331" y="764">4.91</text><use href="#c" x="388" y="765"/><text x="388" y="765">5.42</text><use href="#c" x="445" y="765"/><text x="445" y="765">6.38</text><use href="#c" x="501" y="765"/><text x="501" y="765">10.1</text><use href="#c" x="557" y="765"/><text x="557" y="765">7.24</text><use href="#c" x="614" y="764"/><text x="614" y="764">6.56</text><use href="#c" x="670" y="763"/><text x="670" y="763">5.59</text><use href="#c" x="727" y="762"/><text x="727" y="762">8.78</text><use href="#c" x="783" y="760"/><text x="783" y="760">8.16</text><use href="#c" x="839" y="758"/><text x="839" y="758">7.58</text><use href="#c" x="896" y="756"/><text x="896" y="756">5.29</text><use href="#c" x="952" y="753"/><text x="952" y="753">6.33</text>
</g>
<g class="b">
<text transform="translate(12 67) rotate(80)">5</text><text transform="translate(272 77) rotate(-70)">5</text>
<text transform="translate(77 110) rotate(-15)" style="font-size:22px">7.5</text><text transform="translate(218 196) rotate(15)" style="font-size:20px">7.5</text>
<text transform="translate(322 197) rotate(-75)">7.5</text><text transform="translate(361 253) rotate(80)">7.5</text>
<text transform="translate(376 238) rotate(90)">5</text><text transform="translate(6 257) rotate(45)">5</text>
<text transform="translate(516 86) rotate(90)">5</text><text transform="translate(98 377) rotate(-90)">5</text>
<text transform="translate(386 333) rotate(90)">5</text><text transform="translate(429 367) rotate(90)">5</text>
<text transform="translate(362 445) rotate(100)">7.5</text><text transform="translate(136 527) rotate(90)">5</text>
<text x="10" y="546">5</text><text transform="translate(131 540) rotate(-60)">7.5</text><text x="76" y="577">5</text>
<text x="35" y="647" style="font-size:20px">7.5</text><text x="407" y="554">5</text><text transform="translate(468 591) rotate(10)" style="font-size:20px">7.5</text>
<text transform="translate(436 750) rotate(45)">7.5</text><text transform="translate(1 690) rotate(90)">7.5</text>
<text transform="translate(893 332) rotate(80)">5</text><text transform="translate(830 520) rotate(80)">5</text>
<text transform="translate(843 478) rotate(60)">7.5</text><text transform="translate(685 736) rotate(70)">5</text>
<text transform="translate(760 730) rotate(-70)">7.5</text><text transform="translate(590 750) rotate(45)">7.5</text>
<text x="841" y="651">5</text><text transform="translate(949 670) rotate(-10)" style="font-size:20px">7.5</text>
<text transform="translate(823 727) rotate(100)">5</text><text transform="translate(835 718) rotate(-45)">7.5</text>
<text transform="translate(962 690) rotate(60)">7.5</text><text transform="translate(732 748) rotate(90)">7.5</text>
</g>
<rect x="0.5" y="0.5" width="521.5" height="43" fill="#fff" fill-opacity=".7" stroke="#444" stroke-width="1.5"/>
<text x="4" y="17" textLength="447" lengthAdjust="spacingAndGlyphs" style="font:14px 'Liberation Sans',sans-serif;fill:#111">ECMWF-INDEX-ANAL LCL-Height (m) Wednesday 10-09-2025 00:10</text>
<text x="4" y="38" textLength="510" lengthAdjust="spacingAndGlyphs" style="font:14px 'Liberation Sans',sans-serif;fill:#444">ECMWF-INDEX-ANAL WindShear_ (m/s) 0-1km Wednesday 10-09-2025 00:10</text>
<rect x="572" y="837" width="407" height="60" fill="#fff" fill-opacity=".6"/>
<g style="font:12px 'Liberation Sans',sans-serif;fill:#111;text-anchor:middle">
<text x="640" y="857" textLength="121" lengthAdjust="spacingAndGlyphs">ECMWF-INDEX-ANAL</text><text x="640" y="873">LCL-Height</text><text x="640" y="889">m</text>
<text x="730" y="886">100</text><text x="772" y="886">400</text><text x="814" y="886">800</text><text x="856" y="886">1200</text><text x="898" y="886">1600</text><text x="940" y="886">2000</text>
</g>
<g stroke="#000" stroke-width="1" shape-rendering="crispEdges">
<rect x="709.5" y="844.5" width="21" height="22" fill="#fff"/><rect x="730.5" y="844.5" width="21" height="22" fill="#aaaaff"/><rect x="751.5" y="844.5" width="21" height="22" fill="#aa55ff"/><rect x="772.5" y="844.5" width="21" height="22" fill="#aa00ff"/><rect x="793.5" y="844.5" width="21" height="22" fill="#d4007f"/><rect x="814.5" y="844.5" width="21" height="22" fill="#f00"/><rect x="835.5" y="844.5" width="21" height="22" fill="#ffaa00"/><rect x="856.5" y="844.5" width="21" height="22" fill="#ff0"/><rect x="877.5" y="844.5" width="21" height="22" fill="#aaff00"/><rect x="898.5" y="844.5" width="21" height="22" fill="#55aa00"/><rect x="919.5" y="844.5" width="21" height="22" fill="#00aa7f"/><rect x="940.5" y="844.5" width="21" height="22" fill="#00aaff"/>
<path d="M730.5 866V873M772.5 866V873M814.5 866V873M856.5 866V873M898.5 866V873M940.5 866V873" fill="none"/>
</g>
</svg>
</body></html>
